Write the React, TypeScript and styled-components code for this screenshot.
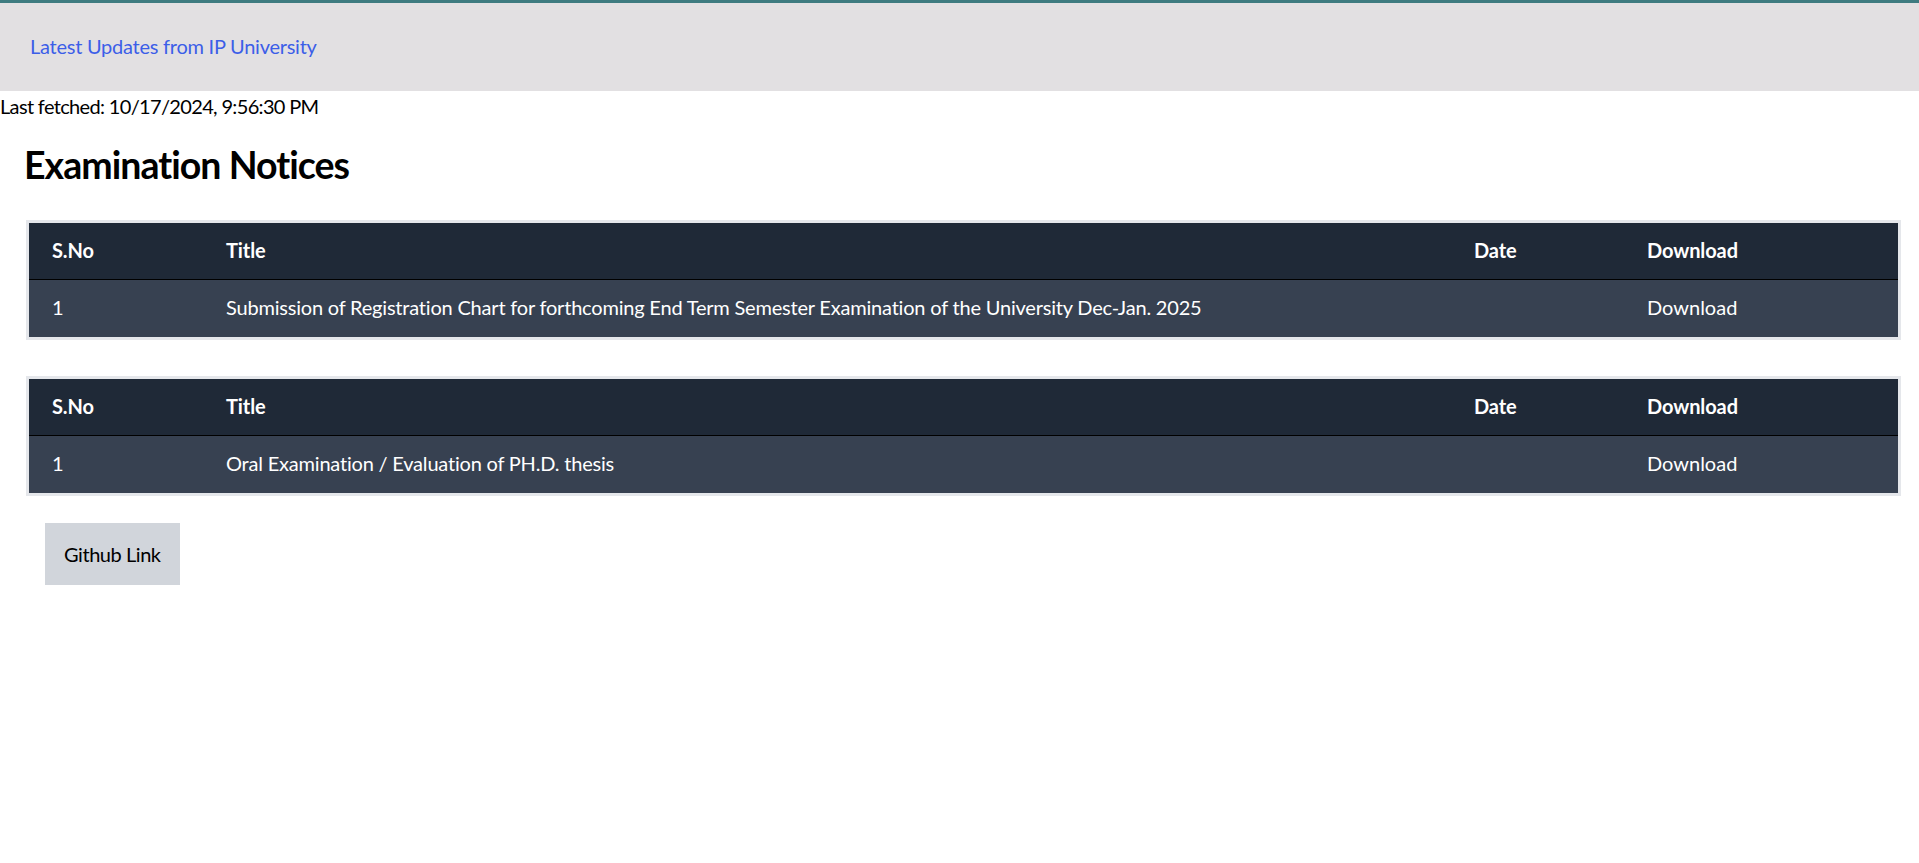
import React from 'react';
import styled, { createGlobalStyle } from 'styled-components';

interface INotice {
  title: string;
  date?: string;
}

const tables: INotice[][] = [
  [
    {
      title:
        'Submission of Registration Chart for forthcoming End Term Semester Examination of the University Dec-Jan. 2025',
    },
  ],
  [{ title: 'Oral Examination / Evaluation of PH.D. thesis' }],
];

const columns = [
  { label: 'S.No', width: 174 },
  { label: 'Title', width: 1248 },
  { label: 'Date', width: 173 },
  { label: 'Download', width: 274 },
];

const App: React.FC = () => {
  return (
    <>
      <GlobalStyle />
      <TopBar>
        <BrandLink href="#">Latest Updates from IP University</BrandLink>
      </TopBar>
      <Fetched>Last fetched: 10/17/2024, 9:56:30 PM</Fetched>
      <Content>
        <Heading>Examination Notices</Heading>
        {tables.map((rows, t) => (
          <TableFrame key={t}>
            <Table>
              <colgroup>
                {columns.map((c) => (
                  <col key={c.label} style={{ width: c.width }} />
                ))}
              </colgroup>
              <thead>
                <HeadRow>
                  {columns.map((c) => (
                    <HeadCell key={c.label}>{c.label}</HeadCell>
                  ))}
                </HeadRow>
              </thead>
              <tbody>
                {rows.map((row, i) => (
                  <BodyRow key={i}>
                    <Cell>{i + 1}</Cell>
                    <Cell>{row.title}</Cell>
                    <Cell>{row.date ?? ''}</Cell>
                    <Cell>
                      <DownloadLink href="#">Download</DownloadLink>
                    </Cell>
                  </BodyRow>
                ))}
              </tbody>
            </Table>
          </TableFrame>
        ))}
        <GithubButton href="#">Github Link</GithubButton>
      </Content>
    </>
  );
};

export default App;

const GlobalStyle = createGlobalStyle`
  html, body {
    margin: 0;
    padding: 0;
    background: #ffffff;
  }
  body {
    font-family: Lato, "Liberation Sans", sans-serif;
    color: #000000;
  }
`;

const TopBar = styled.header`
  border-top: 3px solid #3e7b80;
  background-color: #e2e0e2;
  height: 91px;
  padding-left: 30px;
  display: flex;
  align-items: center;
  box-sizing: border-box;
`;

const BrandLink = styled.a`
  color: #3c5ee8;
  font-size: 20px;
  line-height: 30px;
  letter-spacing: -0.25px;
  text-decoration: none;
  margin-bottom: 2px;
`;

const Fetched = styled.div`
  font-size: 20px;
  line-height: 30px;
  height: 30px;
  letter-spacing: -0.66px;
`;

const Content = styled.main`
  padding: 0 18px 0 26px;
`;

const Heading = styled.h2`
  font-size: 37.5px;
  line-height: 45px;
  font-weight: 700;
  letter-spacing: -0.97px;
  margin: 20.5px 0 33px -2px;
`;

const TableFrame = styled.div`
  border: 3px solid #e5e7eb;
  margin-bottom: 36px;
`;

const Table = styled.table`
  width: 100%;
  border-collapse: collapse;
  table-layout: fixed;
  color: #ffffff;
  font-size: 20px;
`;

const HeadRow = styled.tr`
  background-color: #1f2937;
  border-bottom: 1px solid #000000;
  height: 57px;
`;

const BodyRow = styled.tr`
  background-color: #374151;
  height: 57px;
`;

const HeadCell = styled.th`
  text-align: left;
  font-weight: 700;
  padding: 0 0 2px 23px;
  line-height: 30px;
  letter-spacing: -0.1px;
`;

const Cell = styled.td`
  padding: 0 0 3px 23px;
  line-height: 30px;
  letter-spacing: -0.2px;
`;

const DownloadLink = styled.a`
  color: #ffffff;
  text-decoration: none;
  letter-spacing: 0;
`;

const GithubButton = styled.a`
  display: inline-flex;
  align-items: center;
  height: 62px;
  padding: 0 19px;
  margin: -9px 0 0 19px;
  background-color: #d1d5db;
  color: #000000;
  font-size: 20px;
  letter-spacing: -0.45px;
  text-decoration: none;
  box-sizing: border-box;
`;
